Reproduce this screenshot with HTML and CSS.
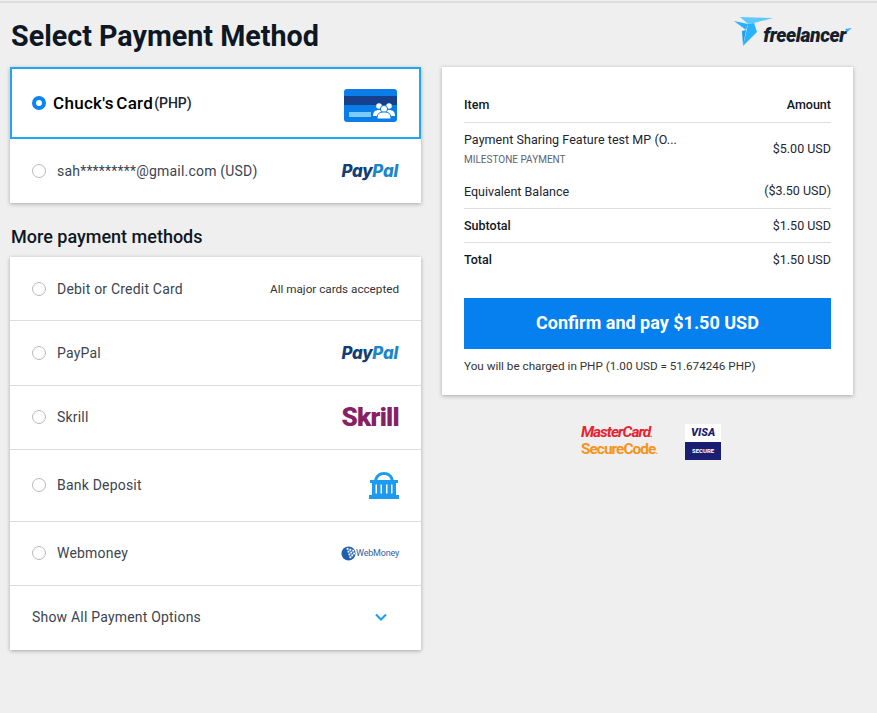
FILE: index.html
```html
<!DOCTYPE html>
<html lang="en">
<head>
    <meta charset="UTF-8">
    <meta name="viewport" content="width=device-width, initial-scale=1.0">
    <title>Select Payment Method</title>
    <link rel="stylesheet" href="styles.css">
</head>
<body>

    <div class="header">
        <h1>Select Payment Method</h1>
        <div class="fl-logo">
            <svg class="fl-bird" width="39" height="30" viewBox="0 0 39 30">
                <polygon points="0,4 14,7 12,13" fill="#29b2fe"/>
                <polygon points="6,0 39,1 20,6 14,7" fill="#5fc8fe"/>
                <polygon points="14,7 20,6 23,15 9,29" fill="#29b2fe"/>
                <polygon points="12,13 9,29 8,14" fill="#1d9fee"/>
            </svg>
            <span class="fl-name">freelancer</span>
            <svg class="fl-tail" width="7" height="4" viewBox="0 0 7 4">
                <polygon points="0,1 7,0 2,4" fill="#29b2fe"/>
            </svg>
        </div>
    </div>

    <div class="main">
        <div class="left">
            <div class="card">
                <div class="row row-selected">
                    <span class="radio radio-on"></span>
                    <span class="saved-name">Chuck's Card</span>
                    <span class="saved-cur">(PHP)</span>
                    <div class="logo card-icon">
                        <svg width="53" height="33" viewBox="0 0 53 33">
                            <rect width="53" height="33" rx="3" fill="#0a7de8"/>
                            <rect y="7" width="53" height="9" fill="#163f8c"/>
                            <rect x="5" y="23" width="22" height="5" fill="#7ccbfb"/>
                            <g fill="#fff">
                                <circle cx="35" cy="17" r="2.8"/>
                                <circle cx="45" cy="17" r="2.8"/>
                                <path d="M29 27c0-4 2-6 6-6s5 2 5 6z"/>
                                <path d="M40 27c0-4 1-6 5-6s6 2 6 6z"/>
                                <circle cx="40" cy="20" r="3.6" stroke="#0a7de8"/>
                                <path d="M33 30c0-5 2-7 7-7s7 2 7 7z" stroke="#0a7de8"/>
                            </g>
                        </svg>
                    </div>
                </div>
                <div class="row row-saved">
                    <span class="radio"></span>
                    <span class="label">sah*********@gmail.com (USD)</span>
                    <div class="logo"><span class="paypal">Pay<b>Pal</b></span></div>
                </div>
            </div>

            <h2>More payment methods</h2>

            <div class="card">
                <div class="row">
                    <span class="radio"></span>
                    <span class="label">Debit or Credit Card</span>
                    <div class="logo accepted">All major cards accepted</div>
                </div>
                <div class="row row-paypal">
                    <span class="radio"></span>
                    <span class="label">PayPal</span>
                    <div class="logo"><span class="paypal">Pay<b>Pal</b></span></div>
                </div>
                <div class="row row-skrill">
                    <span class="radio"></span>
                    <span class="label">Skrill</span>
                    <div class="logo"><span class="skrill">Skrill</span></div>
                </div>
                <div class="row row-bank">
                    <span class="radio"></span>
                    <span class="label">Bank Deposit</span>
                    <div class="logo">
                        <svg width="30" height="27" viewBox="0 0 30 27">
                            <path d="M5 9C6 3 10 0 15 0s9 3 10 9h-3C21 5 19 3 15 3S9 5 8 9z" fill="#1c9bf0"/>
                            <rect x="1" y="8" width="28" height="3" fill="#1c9bf0"/>
                            <path d="M3 11h24v12H3zM6.500 12.500v9H8v-9zM11.500 12.500v9H13v-9zM17 12.500v9h1.500v-9zM22 12.500v9h1.500v-9z" fill="#1c9bf0" fill-rule="evenodd"/>
                            <rect y="23" width="30" height="4" fill="#1c9bf0"/>
                        </svg>
                    </div>
                </div>
                <div class="row row-wm">
                    <span class="radio"></span>
                    <span class="label">Webmoney</span>
                    <div class="logo webmoney">
                        <svg width="15" height="15" viewBox="0 0 16 16">
                            <circle cx="8" cy="8" r="7.500" fill="#1f5fae"/>
                            <g fill="#fff">
                                <rect x="6" y="2" width="2" height="2"/>
                                <rect x="9" y="3" width="2" height="2"/>
                                <rect x="12" y="4" width="2" height="2"/>
                                <rect x="7" y="5" width="2" height="2"/>
                                <rect x="10" y="6" width="2" height="2"/>
                                <rect x="13" y="7" width="2" height="2"/>
                                <rect x="8" y="8" width="2" height="2"/>
                                <rect x="11" y="9" width="2" height="2"/>
                                <rect x="9" y="11" width="2" height="2"/>
                            </g>
                        </svg>
                        <span class="wm-name">WebMoney</span>
                    </div>
                </div>
                <div class="row row-more">
                    <span class="label">Show All Payment Options</span>
                    <svg class="chevron" width="12" height="8" viewBox="0 0 12 8">
                        <path d="M1 1.500l5 5 5-5" fill="none" stroke="#1c9bf0" stroke-width="2"/>
                    </svg>
                </div>
            </div>
        </div>

        <div class="right">
            <div class="card summary">
                <div class="line line-head">
                    <span>Item</span>
                    <span>Amount</span>
                </div>
                <div class="line line-item">
                    <div>
                        <div class="item-name">Payment Sharing Feature test MP (O...</div>
                        <div class="item-type">MILESTONE PAYMENT</div>
                    </div>
                    <span class="item-amount">$5.00 USD</span>
                </div>
                <div class="line line-balance">
                    <span>Equivalent Balance</span>
                    <span class="item-amount">($3.50 USD)</span>
                </div>
                <div class="line line-total">
                    <strong>Subtotal</strong>
                    <span>$1.50 USD</span>
                </div>
                <div class="line line-total no-border">
                    <strong>Total</strong>
                    <span>$1.50 USD</span>
                </div>
                <button class="pay-btn">Confirm and pay $1.50 USD</button>
                <p class="note">You will be charged in PHP (1.00 USD = 51.674246 PHP)</p>
            </div>

            <div class="secure">
                <div class="mc">
                    <div class="mc-top">MasterCard<small>.</small></div>
                    <div class="mc-bottom">SecureCode<small>.</small></div>
                </div>
                <div class="vs">
                    <div class="vs-top">VISA</div>
                    <div class="vs-bottom">SECURE</div>
                </div>
            </div>
        </div>
    </div>

</body>
</html>
```

FILE: styles.css
```css
* {
    box-sizing: border-box;
}
body {
    font-family: Roboto, Arial, sans-serif;
    margin: 0;
    height: 713px;
    overflow: hidden;
    background-color: #efefef;
    color: #1c2530;
    border-top: 2px solid #dedede;
    margin-top: 1px;
}
.header {
    display: flex;
    justify-content: space-between;
    height: 64px;
    padding: 14px 25px 0 11px;
}
h1 {
    margin: 0;
    font-size: 28.700px;
    line-height: 38px;
    font-weight: 700;
    color: #0e1724;
}
.fl-logo {
    display: flex;
    align-items: flex-start;
}
.fl-name {
    font-size: 19.300px;
    line-height: 24px;
    font-weight: 900;
    font-style: italic;
    color: #15202e;
    margin: 7px 0 0 -10px;
    letter-spacing: -0.4px;
}
.fl-tail {
    margin-top: 11px;
    margin-left: -1px;
}
.main {
    display: flex;
    gap: 21px;
    padding: 0 24px 0 10px;
}
.left {
    width: 411px;
}
.right {
    width: 411px;
}
.card {
    background-color: #fff;
    box-shadow: 0 1px 4px rgba(0, 0, 0, 0.3);
}
h2 {
    margin: 0;
    height: 54px;
    padding-top: 23px;
    font-size: 18px;
    line-height: 22px;
    font-weight: 500;
    color: #0e1724;
    padding-left: 1px;
}
.row {
    display: flex;
    align-items: center;
    height: 64px;
    padding: 0 22px;
    border-bottom: 1px solid #ddd;
    font-size: 14px;
}
.row:last-child {
    border-bottom: none;
}
.row-selected {
    height: 72px;
    border: 2px solid #1fa7f5;
    padding: 0 22px 0 20px;
}
.row-paypal {
    height: 65px;
}
.row-skrill, .row-wm {
    padding-bottom: 1px;
}
.row-bank {
    height: 72px;
    padding-bottom: 1px;
}
.row-more {
    justify-content: space-between;
    padding: 0 34px 2px 22px;
}
.radio {
    width: 14px;
    height: 14px;
    border: 1px solid #bbb;
    border-radius: 50%;
    margin-right: 11px;
    flex-shrink: 0;
}
.radio-on {
    border: 4px solid #0a84f0;
}
.label {
    letter-spacing: 0.2px;
    color: #3b4450;
}
.saved-name {
    font-size: 17px;
    font-weight: 500;
    color: #000;
    margin-left: -4px;
    word-spacing: -2px;
    letter-spacing: 0.3px;
}
.saved-cur {
    margin-left: 1px;
    font-weight: 500;
    font-size: 14px;
    color: #1c2530;
}
.logo {
    margin-left: auto;
    display: flex;
    align-items: center;
}
.card-icon {
    margin-top: 4px;
}
.accepted {
    font-size: 11.700px;
    color: #333;
}
.paypal {
    font-family: Inter, Arial, sans-serif;
    font-size: 16.800px;
    font-weight: 800;
    font-style: italic;
    letter-spacing: -0.2px;
    margin-right: 1px;
    color: #123f79;
}
.paypal b {
    color: #1b87c9;
    font-weight: 800;
}
.row-paypal .paypal {
    margin-bottom: 1px;
}
.skrill {
    font-family: Roboto, Arial, sans-serif;
    font-size: 26px;
    font-weight: 900;
    letter-spacing: -0.7px;
    color: #862165;
}
.webmoney {
    gap: 0;
}
.wm-name {
    font-size: 9px;
    letter-spacing: -0.2px;
    color: #33609f;
}
.summary {
    height: 328px;
    padding: 20px 22px 0;
}
.line {
    display: flex;
    justify-content: space-between;
    align-items: center;
    border-bottom: 1px solid #ddd;
    font-size: 12.500px;
}
.line-head {
    height: 36px;
    font-weight: 500;
    color: #0e1724;
}
.line-item {
    height: 52px;
    border-bottom: none;
}
.item-name {
    line-height: 16px;
    letter-spacing: 0.05px;
}
.item-type {
    font-size: 10px;
    line-height: 12px;
    margin-top: 6px;
    color: #5b6573;
}
.item-amount {
    margin-bottom: 2px;
}
.line-balance {
    height: 34px;
}
.line-total {
    height: 34px;
}
.line-total strong {
    font-weight: 500;
    color: #0e1724;
}
.no-border {
    border-bottom: none;
    padding-bottom: 2px;
}
.pay-btn {
    display: block;
    width: 100%;
    height: 51px;
    margin-top: 21px;
    padding: 0 0 2px;
    border: none;
    background-color: #0780ef;
    color: #fff;
    font-family: Roboto, Arial, sans-serif;
    font-size: 18px;
    font-weight: 700;
    cursor: pointer;
}
.note {
    margin: 9px 0 0;
    font-size: 11.700px;
    line-height: 17px;
    color: #333;
}
.secure {
    display: flex;
    justify-content: center;
    align-items: center;
    gap: 28px;
    margin-top: 29px;
    padding-left: 7px;
}
.mc {
    font-size: 15.500px;
    line-height: 15px;
    font-weight: 700;
    letter-spacing: -1px;
}
.mc small {
    font-size: 9px;
}
.mc-top {
    color: #e8222f;
    font-style: italic;
}
.mc-bottom {
    color: #f7931d;
}
.vs {
    width: 36px;
    height: 36px;
    text-align: center;
    background-color: #fff;
}
.vs-top {
    height: 18px;
    font-size: 11px;
    line-height: 18px;
    font-weight: 900;
    font-style: italic;
    color: #1a1f71;
}
.vs-bottom {
    height: 18px;
    background-color: #1a1f71;
    color: #fff;
    font-size: 6px;
    line-height: 18px;
    font-weight: 700;
}
```
